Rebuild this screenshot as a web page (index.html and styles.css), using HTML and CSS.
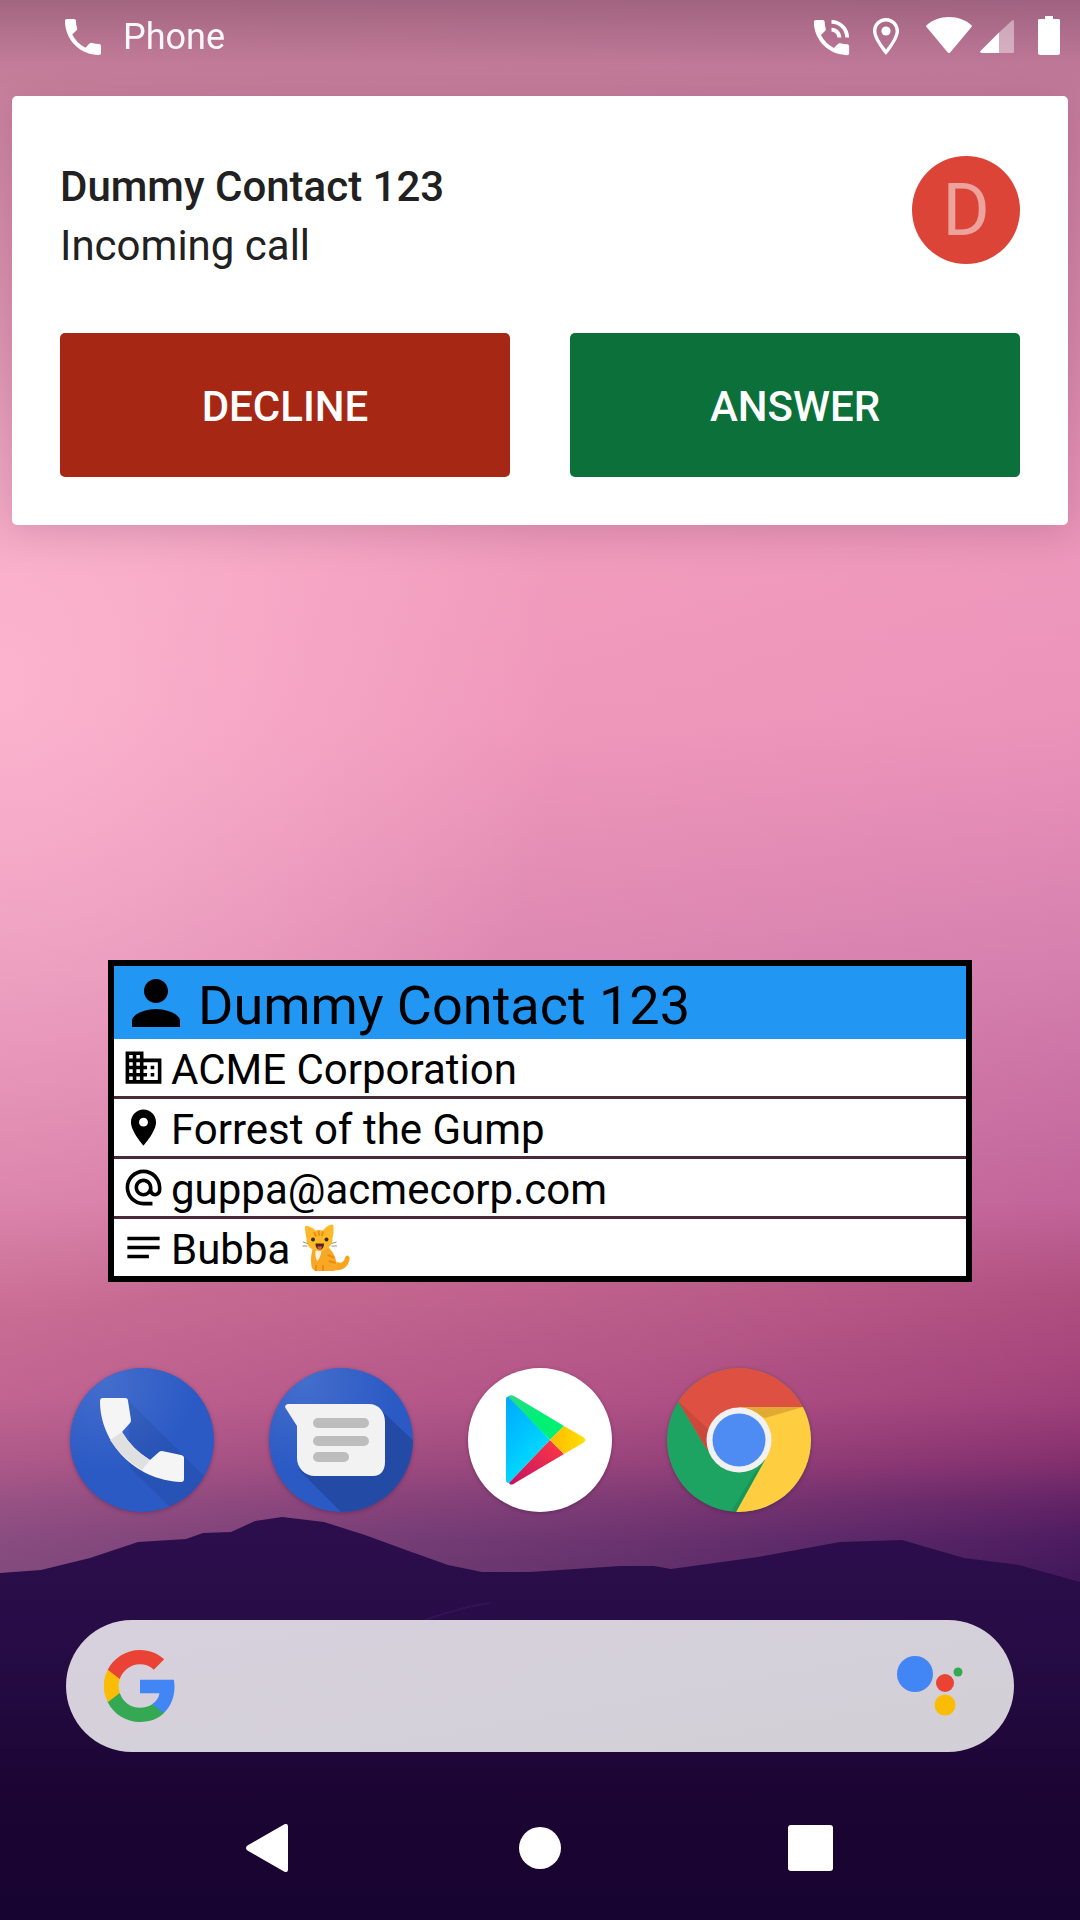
FILE: index.html
```html
<!DOCTYPE html>
<html lang="en">
<head>
<meta charset="utf-8">
<title>Incoming call</title>
<link rel="stylesheet" href="styles.css">
</head>
<body>
<div class="screen">
  <div class="wallpaper"></div>
  <svg class="ridge" viewBox="0 1500 1080 420" aria-hidden="true">
    <defs>
      <linearGradient id="ridgeFill" x1="0" y1="0" x2="0" y2="1">
        <stop offset="0" stop-color="#2c0e4c"/>
        <stop offset="0.3" stop-color="#270c46"/>
        <stop offset="0.7" stop-color="#1b0533"/>
        <stop offset="1" stop-color="#180430"/>
      </linearGradient>
    </defs>
    <path fill="url(#ridgeFill)" d="M0 1573 L41 1570 L90 1558 L138 1542 L186 1539 L203 1533 L231 1532 L255 1521 L282 1517 L324 1522 L365 1535 L406 1550 L448 1565 L482 1572 L530 1572 L620 1566 L654 1566 L671 1569 L758 1557 L840 1542 L902 1540 L964 1558 L1019 1565 L1080 1582 V1920 H0 Z"/>
    <path fill="none" stroke="#4a1a6c" stroke-width="2" opacity="0.4" d="M425 1620 Q465 1606 490 1603"/>
  </svg>
  <div class="scrim"></div>

  <header class="status">
    <div class="status-left">
      <svg class="ic-call" viewBox="0 0 24 24"><path d="M6.62 10.79c1.44 2.83 3.76 5.14 6.59 6.59l2.2-2.2c.27-.27.67-.36 1.02-.24 1.12.37 2.33.57 3.57.57.55 0 1 .45 1 1V20c0 .55-.45 1-1 1-9.39 0-17-7.61-17-17 0-.55.45-1 1-1h3.5c.55 0 1 .45 1 1 0 1.25.2 2.45.57 3.57.11.35.03.74-.25 1.02l-2.2 2.2z"/></svg>
      <span class="app-name">Phone</span>
    </div>
    <div class="status-right">
      <svg class="ic-talk" viewBox="0 0 24 24"><path d="M20 15.5c-1.25 0-2.45-.2-3.57-.57-.35-.11-.74-.03-1.02.24l-2.2 2.2c-2.83-1.44-5.15-3.75-6.59-6.59l2.2-2.21c.28-.26.36-.65.25-1C8.7 6.45 8.5 5.25 8.5 4c0-.55-.45-1-1-1H4c-.55 0-1 .45-1 1 0 9.39 7.61 17 17 17 .55 0 1-.45 1-1v-3.5c0-.55-.45-1-1-1zM19 12h2c0-4.97-4.03-9-9-9v2c3.87 0 7 3.13 7 7zm-4 0h2c0-2.76-2.24-5-5-5v2c1.66 0 3 1.34 3 3z"/></svg>
      <svg class="ic-loc" viewBox="0 0 26 37"><path fill-rule="evenodd" d="M13 0C5.8 0 0 5.8 0 13c0 8.6 13 24 13 24s13-15.4 13-24C26 5.800 20.200 0 13 0zM3.400 13C3.400 7.700 7.700 3.400 13 3.400S22.600 7.700 22.600 13c0 5.400-5.700 13.600-9.600 18.500C9.100 26.600 3.400 18.400 3.400 13z"/><circle cx="13" cy="13" r="4.600"/></svg>
      <svg class="ic-wifi" viewBox="0 0 46 36"><path d="M23 0C14 0 6 3.200 0.500 8.200 0 8.700 0 9.300 0.300 9.800L21.800 35.400C22.500 36.200 23.500 36.200 24.200 35.400L45.700 9.800C46 9.300 46 8.700 45.500 8.200 40 3.200 32 0 23 0z"/></svg>
      <svg class="ic-signal" viewBox="0 0 34 33"><path d="M0.500 31 L19 12.500 V33 H2 C0.500 33 -0.500 32 0.500 31z"/><path opacity="0.42" d="M19 12.500 L32 0.500 C33 -0.300 34 0.300 34 1.500 V31.500 C34 32.500 33.500 33 32.500 33 H19z"/></svg>
      <svg class="ic-batt" viewBox="0 0 22 39"><path d="M7 0h8v3h5.500c.9 0 1.500.6 1.500 1.500V37c0 1.100-.9 2-2 2H2c-1.100 0-2-.9-2-2V4.500C0 3.600.6 3 1.500 3H7z"/></svg>
    </div>
  </header>

  <section class="call-card">
    <div class="call-top">
      <div class="call-text">
        <div class="call-name">Dummy Contact 123</div>
        <div class="call-sub">Incoming call</div>
      </div>
      <div class="avatar">D</div>
    </div>
    <div class="call-actions">
      <div class="btn btn-decline">DECLINE</div>
      <div class="btn btn-answer">ANSWER</div>
    </div>
  </section>

  <section class="widget">
    <div class="w-head">
      <svg class="w-head-icon" viewBox="0 0 24 24"><path d="M12 12c2.210 0 4-1.790 4-4s-1.790-4-4-4-4 1.790-4 4 1.790 4 4 4zm0 2c-2.670 0-8 1.340-8 4v2h16v-2c0-2.660-5.330-4-8-4z"/></svg>
      <span class="w-head-text">Dummy Contact 123</span>
    </div>
    <div class="w-row">
      <svg class="w-icon" viewBox="0 0 24 24"><path d="M12 7V3H2v18h20V7H12zM6 19H4v-2h2v2zm0-4H4v-2h2v2zm0-4H4V9h2v2zm0-4H4V5h2v2zm4 12H8v-2h2v2zm0-4H8v-2h2v2zm0-4H8V9h2v2zm0-4H8V5h2v2zm10 12h-8v-2h2v-2h-2v-2h2v-2h-2V9h8v10zm-2-8h-2v2h2v-2zm0 4h-2v2h2v-2z"/></svg>
      <span class="w-text">ACME Corporation</span>
    </div>
    <div class="w-row">
      <svg class="w-icon" viewBox="0 0 24 24"><path d="M12 2C8.130 2 5 5.130 5 9c0 5.250 7 13 7 13s7-7.750 7-13c0-3.870-3.130-7-7-7zm0 9.500c-1.380 0-2.500-1.120-2.500-2.500s1.120-2.500 2.500-2.500 2.500 1.120 2.500 2.500-1.120 2.500-2.500 2.500z"/></svg>
      <span class="w-text">Forrest of the Gump</span>
    </div>
    <div class="w-row">
      <svg class="w-icon" viewBox="0 0 24 24"><path d="M12 2C6.480 2 2 6.480 2 12s4.480 10 10 10h5v-2h-5c-4.340 0-8-3.660-8-8s3.660-8 8-8 8 3.660 8 8v1.430c0 .79-.71 1.570-1.500 1.570s-1.500-.78-1.500-1.570V12c0-2.760-2.240-5-5-5s-5 2.240-5 5 2.240 5 5 5c1.380 0 2.640-.56 3.540-1.470.65.89 1.770 1.470 2.960 1.470 1.970 0 3.500-1.600 3.500-3.570V12c0-5.520-4.480-10-10-10zm0 13c-1.660 0-3-1.340-3-3s1.340-3 3-3 3 1.340 3 3-1.340 3-3 3z"/></svg>
      <span class="w-text">guppa@acmecorp.com</span>
    </div>
    <div class="w-row">
      <svg class="w-icon" viewBox="0 0 24 24"><path d="M3 18h12v-2H3v2zM3 6v2h18V6H3zm0 7h18v-2H3v2z"/></svg>
      <span class="w-text">Bubba</span>
      <svg class="cat" viewBox="0 0 48 48" role="img" aria-label="cat">
        <path fill="#f6a41c" d="M33 38c4 2 7 0 8-4 .5-2 2-3 3.500-2 2 1.500 1 5-.5 8-2.500 4.500-8 7-13 6z"/>
        <path fill="#f9a825" d="M10 22c-3 6-3.500 14-2.500 20 .4 3 3 5 6 5h16c3 0 4.500-3 3.500-7-1.200-6-4-13-9-17z"/>
        <path fill="#fff3e0" d="M12 25c-1 4-1 8 1 12 2.500-2 4-6 4.500-10z"/>
        <path fill="#ef8b12" d="M24 30l7 3-.8 1.800-7-3zM25 36l7 2-.6 2-7-2zM18 41h2v6h-2zM11 41h2v6h-2z"/>
        <path fill="#fdb92a" d="M1 4c-.300-1.500 1-2.500 2.500-2 3 .8 6 2.200 8 4.500 2-.5 5-.5 7.500 0 2-3 5-5 8-6 1.500-.4 2.500.5 2.500 2 .3 3.500 0 8-1 11.500.6 7-5 13-13 13S2 22 2.500 15C1.500 11 1.300 8 1 4z"/>
        <path fill="#ef8b12" d="M13.500 6.500l2-.2.600 5.500-1.800.2zM18 7l2 .5-1.200 5-1.800-.5zM9 8.500l2-.7 2 4.500-1.800.7z"/>
        <circle cx="9" cy="15.500" r="2" fill="#3e2723"/>
        <circle cx="22.500" cy="15.500" r="2" fill="#3e2723"/>
        <path fill="#4e2a1e" d="M11.500 19.500h8.500c0 4-1.800 6-4.200 6s-4.300-2-4.300-6z"/>
        <path fill="#ef5350" d="M13.500 22.500h4.500c-.3 2-1.200 3-2.200 3s-2-1-2.300-3z"/>
        <path stroke="#616161" stroke-width="0.700" fill="none" d="M3.500 19.500L-1 18M3.500 22H-1.500M27.500 19.500l5-1.500M27.500 22h5.500"/>
      </svg>
    </div>
  </section>

  <section class="dock">
    <svg class="app" viewBox="0 0 144 144" aria-label="Phone">
      <defs>
        <clipPath id="c1"><circle cx="72" cy="72" r="72"/></clipPath>
        <radialGradient id="sheen" cx="0.25" cy="0.1" r="0.9"><stop offset="0" stop-color="#fff" stop-opacity="0.12"/><stop offset="0.7" stop-color="#fff" stop-opacity="0"/></radialGradient>
      </defs>
      <circle cx="72" cy="72" r="72" fill="#2b5ac5"/>
      <g clip-path="url(#c1)">
        <path fill="#2449a2" opacity="0.4" d="M58 32 L150 124 V180 L100 139 L60 100z"/>
      </g>
      <circle cx="72" cy="72" r="72" fill="url(#sheen)"/>
      <path fill="#f5f5f5" d="M30 33 Q30 30 33 30 H55 Q58 30 58 33 L61 52 Q61 54 60 55 L52 64 Q62 81 80 92 L89 84 Q90 83 92 83 L111 87 Q114 87.500 114 90 V111 Q114 114 111 114 C65 112 30 75 30 33z"/>
      <path fill="#e0e0e0" d="M40 72 L52 64 Q62 81 80 92 L72 102 Q52 90 40 72z"/>
    </svg>
    <svg class="app" viewBox="0 0 144 144" aria-label="Messages">
      <defs>
        <clipPath id="c2"><circle cx="72" cy="72" r="72"/></clipPath>
      </defs>
      <circle cx="72" cy="72" r="72" fill="#2b5ac5"/>
      <g clip-path="url(#c2)">
        <path fill="#234ba6" d="M114 44 L150 78 V150 H78 L28 100 L40 108z"/>
      </g>
      <circle cx="72" cy="72" r="72" fill="url(#sheen)"/>
      <path fill="#f2f2f2" d="M20 36 H100 C110 36 116 44 116 54 V94 C116 102 112 108 104 108 H46 C36 108 28 100 28 90 V58 L16.500 40 C15.500 38 17 36 20 36z"/>
      <rect x="44" y="50" width="56" height="10" rx="5" fill="#bdbdbd"/>
      <rect x="44" y="68" width="56" height="10" rx="5" fill="#bdbdbd"/>
      <rect x="44" y="84" width="36" height="10" rx="5" fill="#bdbdbd"/>
    </svg>
    <svg class="app" viewBox="0 0 144 144" aria-label="Play Store">
      <defs>
        <linearGradient id="pBlue" x1="0" y1="0" x2="0.600" y2="1"><stop offset="0" stop-color="#00a8ff"/><stop offset="0.5" stop-color="#00c4ff"/><stop offset="1" stop-color="#00e5ff"/></linearGradient>
        <linearGradient id="pGreen" x1="0" y1="0" x2="1" y2="1"><stop offset="0" stop-color="#32d78c"/><stop offset="0.5" stop-color="#00f076"/><stop offset="1" stop-color="#00f076"/></linearGradient>
        <linearGradient id="pRed" x1="1" y1="0" x2="0" y2="1"><stop offset="0" stop-color="#ff3a44"/><stop offset="1" stop-color="#c31162"/></linearGradient>
        <linearGradient id="pYellow" x1="0" y1="0" x2="1" y2="0"><stop offset="0" stop-color="#ffb900"/><stop offset="1" stop-color="#ffe000"/></linearGradient>
      </defs>
      <circle cx="72" cy="72" r="72" fill="#fff"/>
      <path fill="url(#pBlue)" d="M38 31 C38 29 40 28 42 29 L82 72 L41 115 C39 115 38 114 38 112z"/>
      <path fill="url(#pGreen)" d="M40 28.500 C42 27 44 27 46 28 L96 58 L82 72z"/>
      <path fill="url(#pRed)" d="M41 115 L82 72 L96 86 L47 115 C44 117 42 117 41 115z"/>
      <path fill="url(#pYellow)" d="M96 58 L115 69 C118 71 118 73 115 75 L96 86 L82 72z"/>
    </svg>
    <svg class="app" viewBox="0 0 144 144" aria-label="Chrome">
      <defs>
        <clipPath id="c4"><circle cx="72" cy="72" r="72"/></clipPath>
      </defs>
      <g clip-path="url(#c4)">
        <rect width="144" height="144" fill="#1da462"/>
        <path fill="#dd5042" d="M11 33 L40 82 L72 39 H136 L110 -10 H40z"/>
        <path fill="#b93e31" opacity="0.45" d="M11 33 L42 62 L42 84z"/>
        <path fill="#ffcd40" d="M136 39 H72 L98 92 L69 144 H150 V39z"/>
        <path fill="#d69a2d" opacity="0.7" d="M72 39 H136 L98 50z"/>
        <path fill="#148350" opacity="0.45" d="M69 144 L96 95 L88 104 L64 144z"/>
      </g>
      <circle cx="72" cy="72" r="32.500" fill="#f1f1f1"/>
      <circle cx="72" cy="72" r="26.500" fill="#4e8bf2"/>
    </svg>
  </section>

  <section class="search">
    <svg class="g-logo" viewBox="0 0 48 48" aria-label="Google">
      <path fill="#4285f4" d="M47 24.500c0-1.600-.15-3.200-.43-4.700H24v9h13a11 11 0 0 1-4.800 7.200v6h7.700C44.400 37.900 47 31.700 47 24.500z"/>
      <path fill="#34a853" d="M24 48c6.500 0 11.900-2.100 15.900-5.800l-7.700-6c-2.200 1.500-4.900 2.300-8.200 2.300-6.300 0-11.600-4.200-13.500-9.900H2.500v6.200C6.400 42.600 14.600 48 24 48z"/>
      <path fill="#fbbc05" d="M10.500 28.600a14.400 14.400 0 0 1 0-9.200v-6.200h-8a24 24 0 0 0 0 21.600z"/>
      <path fill="#ea4335" d="M24 9.500c3.500 0 6.700 1.200 9.200 3.600l6.900-6.900C35.900 2.300 30.500 0 24 0 14.600 0 6.400 5.400 2.500 13.200l8 6.200C12.400 13.700 17.700 9.500 24 9.500z"/>
    </svg>
    <svg class="assistant" viewBox="0 0 66 66" aria-label="Assistant">
      <circle cx="18" cy="18" r="18" fill="#4285f4"/>
      <circle cx="48" cy="27" r="9" fill="#ea4335"/>
      <circle cx="61" cy="16" r="4.500" fill="#34a853"/>
      <circle cx="48" cy="49" r="10.500" fill="#fbbc05"/>
    </svg>
  </section>

  <nav class="navbar">
    <svg class="nav-back" viewBox="0 0 42 48"><path d="M38 0.500C40 -0.800 42 0.200 42 2.500V45.500C42 47.800 40 48.800 38 47.500L1.500 26.500C-0.500 25.200 -0.500 22.800 1.500 21.500z"/></svg>
    <div class="nav-home"></div>
    <div class="nav-recent"></div>
  </nav>
</div>
</body>
</html>
```

FILE: styles.css
```css
* { box-sizing: border-box; }
html, body { margin: 0; padding: 0; }
body { width: 1080px; height: 1920px; overflow: hidden; font-family: Roboto, "Liberation Sans", sans-serif; }

.screen {
  position: relative;
  width: 1080px;
  height: 1920px;
  overflow: hidden;
  display: flex;
  flex-direction: column;
}
.wallpaper {
  position: absolute;
  inset: 0;
  background:
    radial-gradient(ellipse 560px 640px at 0px 680px, rgba(255,190,214,0.7), rgba(255,190,214,0) 100%),
    linear-gradient(to right, rgba(255,170,190,0.34), rgba(255,170,190,0.16) 60%, rgba(255,170,190,0) 100%),
    linear-gradient(to bottom, #ee98bc 0, #ee98bc 560px, #ec93ba 720px, #d47fae 970px, #c2659a 1200px, #b05080 1290px, #a0407a 1400px, #84306e 1460px, #642466 1500px, #4c1c60 1540px, #3c1656 1600px, #2a0e4a 1700px);
}
.ridge { position: absolute; left: 0; top: 1500px; width: 1080px; height: 420px; }
.scrim {
  position: absolute;
  left: 0; right: 0; top: 0;
  height: 580px;
  background: linear-gradient(rgba(30,10,30,0.38) 0, rgba(30,10,30,0.23) 64px, rgba(30,10,30,0.2) 110px, rgba(30,10,30,0.12) 345px, rgba(30,10,30,0.04) 500px, rgba(30,10,30,0) 580px);
}

.status {
  position: relative;
  height: 96px;
  display: flex;
  justify-content: space-between;
  padding: 13px 20px 0 59px;
  color: #fff;
  fill: #fff;
  flex: none;
}
.status-left { display: flex; align-items: flex-start; }
.ic-call { width: 48px; height: 48px; }
.app-name { font-size: 36px; line-height: 48px; margin-left: 16px; font-weight: 400; opacity: 0.95; }
.status-right { display: flex; align-items: flex-start; }
.status-right svg { display: block; flex: none; }
.ic-talk { width: 47px; height: 47px; margin: 1px 0 0 0; }
.ic-loc { width: 26px; height: 37px; margin: 5px 0 0 18px; }
.ic-wifi { width: 46px; height: 36px; margin: 4px 0 0 27px; }
.ic-signal { width: 34px; height: 33px; margin: 7px 0 0 8px; }
.ic-batt { width: 22px; height: 39px; margin: 3px 0 0 24px; }

.call-card {
  position: relative;
  flex: none;
  margin: 0 12px;
  height: 429px;
  background: #fff;
  border-radius: 5px;
  padding: 60px 48px 0;
  box-shadow: 0 6px 36px rgba(60, 10, 40, 0.14);
}
.call-top { display: flex; justify-content: space-between; height: 177px; }
.call-name { font-size: 42px; font-weight: 500; line-height: 58px; padding-top: 2px; color: #212121; }
.call-sub { font-size: 42px; font-weight: 400; line-height: 60px; color: #212121; }
.avatar {
  width: 108px;
  height: 108px;
  border-radius: 50%;
  background: #db4437;
  color: rgba(255,255,255,0.5);
  font-size: 72px;
  font-weight: 400;
  display: flex;
  align-items: center;
  justify-content: center;
}
.call-actions { display: flex; gap: 60px; }
.btn {
  flex: 1;
  height: 144px;
  border-radius: 5px;
  color: #fff;
  font-size: 42px;
  font-weight: 500;
  padding-top: 2px;
  display: flex;
  align-items: center;
  justify-content: center;
}
.btn-decline { background: #a52714; }
.btn-answer { background: #0b7039; }

.widget {
  position: relative;
  flex: none;
  width: 864px;
  height: 322px;
  margin: 435px 0 0 108px;
  border: 6px solid #000;
  background: #4a2a38;
  color: #000;
  display: flex;
  flex-direction: column;
}
.w-head {
  height: 73px;
  background: #2196f3;
  display: flex;
  align-items: center;
  padding-left: 6px;
  flex: none;
}
.w-head-icon { width: 72px; height: 72px; flex: none; }
.w-head-text { font-size: 54px; margin-left: 6px; line-height: 66px; padding-top: 6px; }
.w-row {
  height: 57px;
  background: #fff;
  display: flex;
  align-items: center;
  padding-left: 8px;
  flex: none;
}
.w-row + .w-row { margin-top: 3px; }
.w-icon { width: 43px; height: 43px; flex: none; }
.w-text { font-size: 42px; margin-left: 6px; line-height: 52px; padding-top: 5px; }
.cat { width: 48px; height: 48px; margin-left: 14px; flex: none; overflow: visible; }

.dock {
  position: relative;
  flex: none;
  display: flex;
  gap: 55px;
  margin: 86px 0 0 70px;
}
.app { width: 144px; height: 144px; flex: none; filter: drop-shadow(0 1px 2px rgba(40,0,40,0.3)); }

.search {
  position: relative;
  flex: none;
  width: 948px;
  height: 132px;
  margin: 108px 0 0 66px;
  border-radius: 66px;
  background: linear-gradient(170deg, #d6d1dd, #d3cfd6);
  display: flex;
  justify-content: space-between;
  align-items: center;
  padding: 0 51px 0 38px;
}
.g-logo { width: 72px; height: 72px; flex: none; }
.assistant { width: 66px; height: 66px; flex: none; margin-top: 6px; }

.navbar {
  position: relative;
  flex: none;
  height: 48px;
  margin: 72px 0 0 246px;
  display: flex;
  align-items: center;
}
.nav-back { width: 42px; height: 48px; fill: #fff; flex: none; }
.nav-home { width: 42px; height: 42px; border-radius: 50%; background: #fff; margin-left: 231px; flex: none; }
.nav-recent { width: 45px; height: 46px; border-radius: 3px; background: #fff; margin-left: 227px; flex: none; }
```
